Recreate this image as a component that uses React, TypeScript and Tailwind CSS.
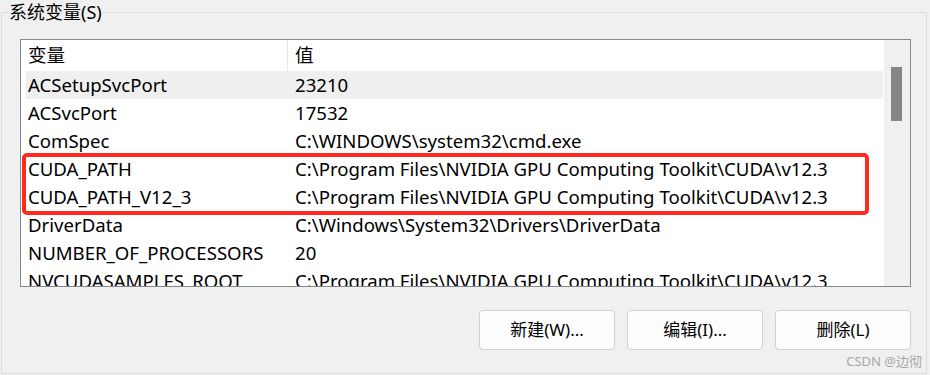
import React from "react";

const rows: [string, string][] = [
  ["ACSetupSvcPort", "23210"],
  ["ACSvcPort", "17532"],
  ["ComSpec", "C:\\WINDOWS\\system32\\cmd.exe"],
  ["CUDA_PATH", "C:\\Program Files\\NVIDIA GPU Computing Toolkit\\CUDA\\v12.3"],
  ["CUDA_PATH_V12_3", "C:\\Program Files\\NVIDIA GPU Computing Toolkit\\CUDA\\v12.3"],
  ["DriverData", "C:\\Windows\\System32\\Drivers\\DriverData"],
  ["NUMBER_OF_PROCESSORS", "20"],
  ["NVCUDASAMPLES_ROOT", "C:\\Program Files\\NVIDIA GPU Computing Toolkit\\CUDA\\v12.3"],
];

const font = { fontFamily: '"Noto Sans", "Noto Sans CJK SC", sans-serif' };

export default function App() {
  return (
    <div
      className="relative w-[930px] h-[375px] bg-[#f0f0f0] overflow-hidden text-black"
      style={font}
    >
      <div className="ml-[1px] mt-[12px] w-[926px] h-[362px] border border-[#dcdcdc] flex flex-col">
        <div className="ml-[18px] mt-[26px] w-[891px] h-[248px] border border-[#828790] bg-white flex">
          <div className="w-[862px] flex flex-col overflow-hidden text-[18.6px] leading-none">
            <div className="h-[31px] flex items-stretch shrink-0">
              <div className="w-[266px] pl-[7px] flex items-center">变量</div>
              <div className="w-px bg-[#e5e5e5]" />
              <div className="pl-[7px] flex items-center">值</div>
            </div>
            {rows.map(([k, v], i) => (
              <div
                key={k}
                className={`ml-[5px] h-[28px] shrink-0 flex items-center whitespace-nowrap ${
                  i === 0 ? "bg-[#efefef]" : ""
                }`}
              >
                <div className="w-[261px] pl-[2px]">{k}</div>
                <div className="w-px" />
                <div className="pl-[7px]">{v}</div>
              </div>
            ))}
          </div>
          <div className="w-px bg-white" />
          <div className="flex-1 bg-[#f0f0f0] pl-[7px] pt-[27px]">
            <div className="w-[11px] h-[54px] bg-[#868686]" />
          </div>
        </div>
        <div className="mt-[23px] pr-[15px] flex justify-end gap-[12px] text-[17px]">
          {["新建(W)...", "编辑(I)...", "删除(L)"].map((t) => (
            <button
              key={t}
              className="w-[136px] h-[40px] bg-[#fdfdfd] border border-[#d0d0d0] rounded-[4px] flex items-center justify-center"
            >
              {t}
            </button>
          ))}
        </div>
      </div>
      <div className="absolute left-[8px] top-[1px] px-[1px] bg-[#f0f0f0] text-[18px] leading-[22px]">
        系统变量(S)
      </div>
      <div className="absolute left-[22px] top-[153px] w-[847px] h-[62px] border-[4px] border-[#ff2a1f] rounded-[5px]" />
      <div className="absolute right-[8px] top-[353px] text-[13px] leading-[16px] text-[#a8a8a8]">
        CSDN @边彻
      </div>
    </div>
  );
}
